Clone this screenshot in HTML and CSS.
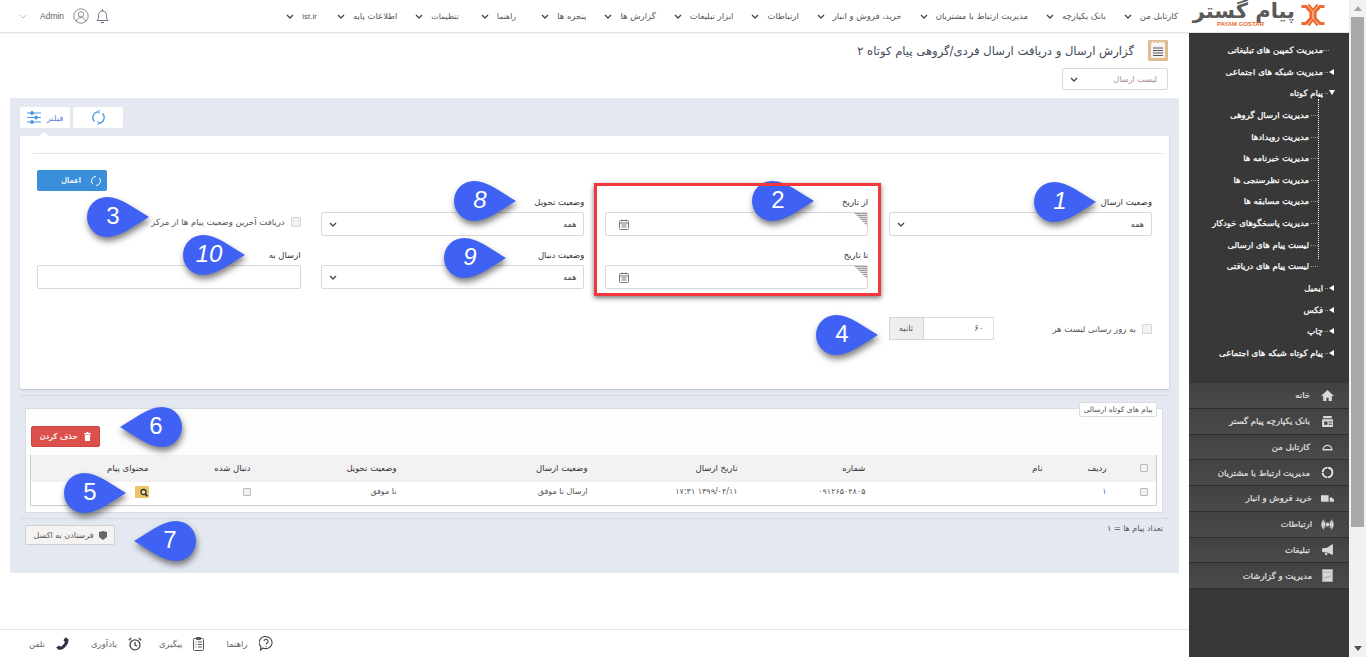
FILE: index.html
```html
<!DOCTYPE html>
<html lang="fa" dir="rtl">
<head>
<meta charset="utf-8">
<title>گزارش ارسال و دریافت</title>
<link rel="stylesheet" href="styles.css">
</head>
<body>
<div class="shell">
  <div class="scrollbar">
    <span class="sb-up"></span>
    <span class="sb-thumb"></span>
    <span class="sb-down"></span>
  </div>
  <div class="app">
    <header class="topbar">
      <div class="logo">
        <svg class="logo-x" width="24" height="24" viewBox="0 0 24 24" fill="none" stroke="#ee6a2c" stroke-width="3.200"><path d="M.5 3.500h4.500l5 5.500v6l-5 5.500H.5"/><path d="M23.500 3.500H19l-5 5.500v6l5 5.500h4.500"/><path d="M7.500 1.500L12 7l4.500-5.500M7.500 22.500L12 17l4.500 5.500" stroke-width="2"/></svg>
        <div class="logo-words">
          <span class="logo-fa">پیام گستر</span>
          <span class="logo-en">PAYAM GOSTAR</span>
        </div>
      </div>
      <nav class="nav">
        <a class="nav-item">کارتابل من<svg class="chev" viewBox="0 0 8 5"><path d="M1 1l3 3 3-3"/></svg></a>
        <a class="nav-item">بانک یکپارچه<svg class="chev" viewBox="0 0 8 5"><path d="M1 1l3 3 3-3"/></svg></a>
        <a class="nav-item">مدیریت ارتباط با مشتریان<svg class="chev" viewBox="0 0 8 5"><path d="M1 1l3 3 3-3"/></svg></a>
        <a class="nav-item">خرید، فروش و انبار<svg class="chev" viewBox="0 0 8 5"><path d="M1 1l3 3 3-3"/></svg></a>
        <a class="nav-item">ارتباطات<svg class="chev" viewBox="0 0 8 5"><path d="M1 1l3 3 3-3"/></svg></a>
        <a class="nav-item">ابزار تبلیغات<svg class="chev" viewBox="0 0 8 5"><path d="M1 1l3 3 3-3"/></svg></a>
        <a class="nav-item">گزارش ها<svg class="chev" viewBox="0 0 8 5"><path d="M1 1l3 3 3-3"/></svg></a>
        <a class="nav-item">پنجره ها<svg class="chev" viewBox="0 0 8 5"><path d="M1 1l3 3 3-3"/></svg></a>
        <a class="nav-item nav-sm nav-help">راهنما<svg class="chev" viewBox="0 0 8 5"><path d="M1 1l3 3 3-3"/></svg></a>
        <a class="nav-item nav-sm nav-settings">تنظیمات<svg class="chev" viewBox="0 0 8 5"><path d="M1 1l3 3 3-3"/></svg></a>
        <a class="nav-item">اطلاعات پایه<svg class="chev" viewBox="0 0 8 5"><path d="M1 1l3 3 3-3"/></svg></a>
        <a class="nav-item nav-latin">ist.ir<svg class="chev" viewBox="0 0 8 5"><path d="M1 1l3 3 3-3"/></svg></a>
      </nav>
      <div class="user">
        <svg class="chev chev-light" viewBox="0 0 8 5"><path d="M1 1l3 3 3-3"/></svg>
        <span class="user-name">Admin</span>
        <svg width="16" height="16" viewBox="0 0 16 16" fill="none" stroke="#8b8f9c"><circle cx="8" cy="8" r="7.200"/><circle cx="8" cy="6.300" r="2.700"/><path d="M3.200 13c1-2.600 2.800-3.400 4.800-3.400s3.800.8 4.800 3.400"/></svg>
        <svg width="13" height="16" viewBox="0 0 13 16" fill="none" stroke="#6f7480"><path d="M1 12.500c1.500-1.500 1.500-3 1.500-5 0-2.500 1.500-4.500 4-4.500s4 2 4 4.500c0 2 0 3.500 1.500 5z"/><path d="M5 14.500h3M6.500 1v2"/></svg>
      </div>
    </header>
    <div class="body">
      <aside class="sidebar">
        <ul class="tree">
          <li class="t-root t-none">مدیریت کمپین های تبلیغاتی</li>
          <li class="t-root t-closed">مدیریت شبکه های اجتماعی</li>
          <li class="t-root t-open">پیام کوتاه</li>
          <li class="t-sub-wrap">
            <ul class="t-subs">
              <li class="t-sub">مدیریت ارسال گروهی</li>
              <li class="t-sub">مدیریت رویدادها</li>
              <li class="t-sub">مدیریت خبرنامه ها</li>
              <li class="t-sub">مدیریت نظرسنجی ها</li>
              <li class="t-sub">مدیریت مسابقه ها</li>
              <li class="t-sub">مدیریت پاسخگوهای خودکار</li>
              <li class="t-sub">لیست پیام های ارسالی</li>
              <li class="t-sub">لیست پیام های دریافتی</li>
            </ul>
          </li>
          <li class="t-root t-closed">ایمیل</li>
          <li class="t-root t-closed">فکس</li>
          <li class="t-root t-closed">چاپ</li>
          <li class="t-root t-closed">پیام کوتاه شبکه های اجتماعی</li>
        </ul>
        <ul class="side-menu">
          <li class="sm-row"><svg class="sm-ic" viewBox="0 0 12 12"><path d="M6 1L0 6.500h2V11h3V8h2v3h3V6.500h2z"/></svg>خانه</li>
          <li class="sm-row"><svg class="sm-ic" viewBox="0 0 12 12"><path d="M2 1h8v2H2zM1 4h10v7H1zm2 2v3h3V6zm4 0v1h3V6zm0 2v1h3V8z" fill-rule="evenodd"/></svg>بانک یکپارچه پیام گستر</li>
          <li class="sm-row"><svg class="sm-ic" viewBox="0 0 12 12"><path d="M2 9a4 4 0 1 1 8 0z" fill="none" stroke="#d8d8d8" stroke-width="1.300"/></svg>کارتابل من</li>
          <li class="sm-row"><svg class="sm-ic" viewBox="0 0 12 12"><circle cx="6" cy="6" r="4.500" fill="none" stroke="#e4e4e4" stroke-width="1.800" stroke-dasharray="6.500 .6"/></svg>مدیریت ارتباط با مشتریان</li>
          <li class="sm-row sm-wide"><svg class="sm-ic" viewBox="0 0 12 12"><path d="M0 3h7v6H0zM8 5h2l2 2v2H8z"/></svg>خرید فروش و انبار</li>
          <li class="sm-row sm-wide"><svg class="sm-ic" viewBox="0 0 12 12" fill="none" stroke="#d8d8d8" stroke-width=".8"><circle cx="6" cy="6" r="1.500" fill="#d8d8d8"/><path d="M3.800 3a4 4 0 0 0 0 6M8.200 3a4 4 0 0 1 0 6M2.500 1.500a6.500 6.500 0 0 0 0 9M9.500 1.500a6.500 6.500 0 0 1 0 9"/></svg>ارتباطات</li>
          <li class="sm-row"><svg class="sm-ic" viewBox="0 0 12 12"><path d="M11 1v10L5 8.500H3L1 8V5l2-.5h2zM3.500 9h2l.5 2H4z"/></svg>تبلیغات</li>
          <li class="sm-row sm-wide"><svg class="sm-ic" viewBox="0 0 12 12" fill="none" stroke="#aaa"><path d="M1.500.5h9v11h-9z"/><path d="M3 3h6M3 9l2-2 1.500 1L9 6"/></svg>مدیریت و گزارشات</li>
        </ul>
      </aside>
      <main class="main">
        <div class="page-head">
          <div class="title-row">
            <svg class="title-ic" width="20" height="21" viewBox="0 0 20 21"><rect width="20" height="21" rx="1" fill="#dfbb92"/><rect x="3" y="3" width="14" height="15" rx="1" fill="#f4f4f4"/><path d="M5 8h10M5 10.500h10M5 13h10M5 15.500h10" stroke="#555" stroke-width="1.200"/><path d="M5 1.500v3M8 1.500v3M12 1.500v3M15 1.500v3" stroke="#fff" stroke-width="1.200"/></svg>
            <h1 class="title">گزارش ارسال و دریافت ارسال فردی/گروهی پیام کوتاه ۲</h1>
          </div>
          <div class="select select-head"><span>لیست ارسال</span><svg class="chev" viewBox="0 0 8 5"><path d="M1 1l3 3 3-3"/></svg></div>
        </div>
        <section class="panel">
          <div class="tabs">
            <div class="tab tab-refresh">
              <svg width="15" height="15" viewBox="0 0 16 16" fill="none" stroke="#4d9be6" stroke-width="1.500"><path d="M8 2a6 6 0 0 0-4.240 10.240M8 14a6 6 0 0 0 4.240-10.240"/><path d="M9.500.3L7 2l2.500 1.800M6.500 12.200L9 14l-2.500 1.700" stroke-width="1"/></svg>
            </div>
            <div class="tab tab-filter">
              <span>فیلتر</span>
              <svg width="14" height="13" viewBox="0 0 14 13" stroke="#4d9be6"><path d="M0 2h14M0 6.500h14M0 11h14"/><circle cx="5" cy="2" r="1.500" fill="#4d9be6"/><circle cx="9" cy="6.500" r="1.500" fill="#4d9be6"/><circle cx="5" cy="11" r="1.500" fill="#4d9be6"/></svg>
            </div>
          </div>
          <div class="card">
            <div class="card-rule"></div>
            <div class="apply-row">
              <button class="btn-apply"><svg width="12" height="12" viewBox="0 0 16 16" fill="none" stroke="#fff" stroke-width="1.300"><path d="M8 2a6 6 0 0 0-4.240 10.240M8 14a6 6 0 0 0 4.240-10.240"/></svg>اعمال</button>
            </div>
            <div class="form-grid">
              <div class="field">
                <label class="lbl">وضعیت ارسال</label>
                <div class="select"><span>همه</span><svg class="chev" viewBox="0 0 8 5"><path d="M1 1l3 3 3-3"/></svg></div>
              </div>
              <div class="field">
                <label class="lbl">از تاریخ</label>
                <div class="input date">
                  <svg width="10" height="11" viewBox="0 0 10 11" fill="none" stroke="#777"><rect x=".5" y="1.500" width="9" height="9" rx="1"/><path d="M.5 4h9M2.500 6h5M2.500 8h5M3 .5v2M7 .5v2"/></svg>
                </div>
              </div>
              <div class="field">
                <label class="lbl">وضعیت تحویل</label>
                <div class="select"><span>همه</span><svg class="chev" viewBox="0 0 8 5"><path d="M1 1l3 3 3-3"/></svg></div>
              </div>
              <div class="field field-check">
                <label class="check-line"><span class="cb"></span>دریافت آخرین وضعیت پیام ها از مرکز</label>
              </div>

              <div class="field field-empty"></div>
              <div class="field">
                <label class="lbl">تا تاریخ</label>
                <div class="input date">
                  <svg width="10" height="11" viewBox="0 0 10 11" fill="none" stroke="#777"><rect x=".5" y="1.500" width="9" height="9" rx="1"/><path d="M.5 4h9M2.500 6h5M2.500 8h5M3 .5v2M7 .5v2"/></svg>
                </div>
              </div>
              <div class="field">
                <label class="lbl">وضعیت دنبال</label>
                <div class="select"><span>همه</span><svg class="chev" viewBox="0 0 8 5"><path d="M1 1l3 3 3-3"/></svg></div>
              </div>
              <div class="field">
                <label class="lbl">ارسال به</label>
                <div class="input"></div>
              </div>

              <div class="refresh-row">
                <label class="check-line"><span class="cb"></span>به روز رسانی لیست هر</label>
                <div class="input-group"><span class="ig-value">۶۰</span><span class="ig-addon">ثانیه</span></div>
              </div>
            </div>
          </div>
          <div class="rule"></div>
          <section class="results">
            <div class="legend">پیام های کوتاه ارسالی</div>
            <div class="results-tools">
              <button class="btn-del"><svg width="7" height="9" viewBox="0 0 7 9" fill="#fff"><path d="M0 1h7v1H0zM2.500 0h2v1h-2zM.7 2.500h5.600L6 9H1z"/></svg>حذف کردن</button>
            </div>
            <table class="grid">
              <colgroup>
                <col class="c-a"><col class="c-b"><col class="c-c"><col class="c-d"><col class="c-e"><col class="c-f"><col class="c-g"><col class="c-h"><col class="c-i">
              </colgroup>
              <thead>
                <tr>
                  <th class="cell-cb"><span class="cb cb-sm"></span></th>
                  <th>ردیف</th><th>نام</th><th>شماره</th><th>تاریخ ارسال</th><th>وضعیت ارسال</th><th>وضعیت تحویل</th><th>دنبال شده</th><th>محتوای پیام</th>
                </tr>
              </thead>
              <tbody>
                <tr>
                  <td class="cell-cb"><span class="cb cb-sm"></span></td>
                  <td class="link">۱</td><td></td><td>۰۹۱۲۶۵۰۴۸۰۵</td><td>۱۳۹۹/۰۴/۱۱ ۱۷:۳۱</td><td>ارسال نا موفق</td><td>نا موفق</td>
                  <td><span class="cb cb-sm"></span></td>
                  <td><svg class="msg-ic" width="14" height="12" viewBox="0 0 14 12"><rect width="14" height="12" rx="1" fill="#edc468"/><circle cx="8.500" cy="6" r="2.500" fill="#f6e6b8" stroke="#333" stroke-width="1.300"/><path d="M10.300 8l2 2.300" stroke="#222" stroke-width="1.500"/></svg></td>
                </tr>
              </tbody>
            </table>
          </section>
          <div class="rule rule-b"></div>
          <div class="foot-row">
            <span class="count">تعداد پیام ها = ۱</span>
            <button class="btn-excel"><svg width="8" height="9" viewBox="0 0 8 9" fill="#666"><path d="M0 1l4-1 4 1v5L4 9 0 6z"/></svg>فرستادن به اکسل</button>
          </div>
        </section>
        <footer class="footer">
          <a class="f-item"><svg width="14" height="15" viewBox="0 0 14 15" fill="none" stroke="#444" stroke-width="1.100"><path d="M7 .6a6.300 6 0 1 1-3 11.400L1.500 14l.4-3.300A6.300 6 0 0 1 7 .6z"/><path d="M5 5.200a2 2 0 1 1 3 1.800c-.7.400-1 .8-1 1.600M7 10v1"/></svg>راهنما</a>
          <a class="f-item f-tight"><svg width="11" height="14" viewBox="0 0 11 14" fill="none" stroke="#555"><rect x=".5" y="1.500" width="10" height="12" rx="1"/><path d="M3.500.5h4v2h-4zM2.500 5h1M5 5h4M2.500 7.500h1M5 7.500h4M2.500 10h1M5 10h4"/></svg>پیگیری</a>
          <a class="f-item"><svg width="14" height="14" viewBox="0 0 14 14" fill="none" stroke="#444" stroke-width="1.300"><circle cx="7" cy="7.800" r="5"/><path d="M7 5v3l2 1M.8 3.200L3.200 1M13.200 3.200L10.800 1"/></svg>یادآوری</a>
          <a class="f-item"><svg width="13" height="13" viewBox="0 0 13 13" fill="#2c3345"><path d="M9.500.3l3 2c.4 3-1.500 6-3.500 8s-4 2.700-6.500 2.500L.2 10.500 3 8.400l1.600 1.400C6.300 9 8.500 6.500 9 5L7.400 3.200z"/></svg>تلفن</a>
        </footer>
      </main>
    </div>
  </div>

  <div class="redbox"></div>

  <div class="callout c1 it"><svg class="drop" viewBox="0 0 62 40"><path d="M20 0C34 0 48 12 62 20 48 28 34 40 20 40A20 20 0 0 1 20 0Z"/></svg><span>1</span></div>
  <div class="callout c2"><svg class="drop" viewBox="0 0 62 40"><path d="M20 0C34 0 48 12 62 20 48 28 34 40 20 40A20 20 0 0 1 20 0Z"/></svg><span>2</span></div>
  <div class="callout c3"><svg class="drop" viewBox="0 0 62 40"><path d="M20 0C34 0 48 12 62 20 48 28 34 40 20 40A20 20 0 0 1 20 0Z"/></svg><span>3</span></div>
  <div class="callout c4"><svg class="drop" viewBox="0 0 62 40"><path d="M20 0C34 0 48 12 62 20 48 28 34 40 20 40A20 20 0 0 1 20 0Z"/></svg><span>4</span></div>
  <div class="callout c5"><svg class="drop" viewBox="0 0 62 40"><path d="M20 0C34 0 48 12 62 20 48 28 34 40 20 40A20 20 0 0 1 20 0Z"/></svg><span>5</span></div>
  <div class="callout c6 flip"><svg class="drop" viewBox="0 0 62 40"><path d="M42 0C28 0 14 12 0 20 14 28 28 40 42 40A20 20 0 0 0 42 0Z"/></svg><span>6</span></div>
  <div class="callout c7 flip"><svg class="drop" viewBox="0 0 62 40"><path d="M42 0C28 0 14 12 0 20 14 28 28 40 42 40A20 20 0 0 0 42 0Z"/></svg><span>7</span></div>
  <div class="callout c8 it"><svg class="drop" viewBox="0 0 62 40"><path d="M20 0C34 0 48 12 62 20 48 28 34 40 20 40A20 20 0 0 1 20 0Z"/></svg><span>8</span></div>
  <div class="callout c9 it"><svg class="drop" viewBox="0 0 62 40"><path d="M20 0C34 0 48 12 62 20 48 28 34 40 20 40A20 20 0 0 1 20 0Z"/></svg><span>9</span></div>
  <div class="callout c10 it"><svg class="drop" viewBox="0 0 62 40"><path d="M20 0C34 0 48 12 62 20 48 28 34 40 20 40A20 20 0 0 1 20 0Z"/></svg><span>10</span></div>
</div>
</body>
</html>
```

FILE: styles.css
```css
* { box-sizing: border-box; }
html, body { margin: 0; padding: 0; height: 657px; overflow: hidden; background: #fff; }
body { font-family: "DejaVu Sans", "Liberation Sans", sans-serif; font-size: 9px; color: #555; }
ul { list-style: none; margin: 0; padding: 0; }
button { font-family: inherit; cursor: pointer; }

.shell { position: relative; display: flex; width: 1366px; height: 657px; }
.app { width: 1349px; height: 657px; display: flex; flex-direction: column; }

/* scrollbar */
.scrollbar { width: 17px; height: 657px; background: #f1f1f1; display: flex; flex-direction: column; align-items: center; flex: none; }
.sb-up { margin-top: 6px; width: 0; height: 0; border: 4px solid transparent; border-top: 0; border-bottom: 5px solid #a3a3a3; }
.sb-thumb { margin-top: 6px; width: 13px; height: 510px; background: #a8a8a8; }
.sb-down { margin-top: auto; margin-bottom: 6px; width: 0; height: 0; border: 4px solid transparent; border-bottom: 0; border-top: 5px solid #505050; }

/* top bar */
.topbar { height: 33px; flex: none; display: flex; align-items: center; background: #fff; border-bottom: 1px solid #e2e2e2; box-shadow: 0 1px 2px rgba(0,0,0,.06); position: relative; z-index: 2; }
.logo { width: 160px; flex: none; display: flex; align-items: center; gap: 6px; padding-right: 24px; height: 33px; }
.logo-x { flex: none; margin-top: -3px; }
.logo-words { display: flex; flex-direction: column; width: 82px; align-items: stretch; margin-top: -2px; }
.logo-fa { font-size: 21px; line-height: 19px; font-weight: 700; color: #5a5a5a; text-align: center; white-space: nowrap; }
.logo-en { direction: ltr; font-family: "Liberation Sans", sans-serif; font-size: 6px; line-height: 7px; font-weight: 700; color: #e8692c; text-align: left; padding-left: 4px; }
.nav { display: flex; align-items: center; gap: 18px; padding-right: 11px; white-space: nowrap; }
.nav-item { display: flex; align-items: center; gap: 8px; color: #555; font-size: 8.500px; }
.nav-sm { font-size: 7.800px; }
.nav-help { margin-right: 7px; }
.nav-settings { margin-right: 4px; }
.nav-latin { direction: ltr; flex-direction: row-reverse; font-family: "Liberation Sans", sans-serif; font-size: 8px; margin-right: 2px; }
.chev { width: 8px; height: 5px; fill: none; stroke: #444; stroke-width: 1.300; flex: none; }
.chev-light { stroke: #aaa; stroke-width: .8; }
.user { margin-right: auto; direction: ltr; display: flex; align-items: center; padding-left: 19px; gap: 7px; }
.user-name { font-family: "Liberation Sans", sans-serif; font-size: 8.500px; color: #666; margin-left: 6px; margin-right: 2px; }

.body { flex: 1; display: flex; min-height: 0; }

/* sidebar */
.sidebar { width: 160px; flex: none; background: #383838; display: flex; flex-direction: column; }
.tree { height: 350px; flex: none; padding-top: 7px; color: #fff; font-size: 8.500px; -webkit-text-stroke: .25px #fff; }
.t-root { position: relative; height: 21.650px; line-height: 21.650px; padding-right: 26px; white-space: nowrap; }
.t-root::before { content: ""; position: absolute; right: 15px; top: 7px; width: 0; height: 0; }
.t-root::after { content: ""; position: absolute; right: 21px; top: 10px; width: 3px; border-top: 1px dotted #999; }
.t-closed::before { border: 3px solid transparent; border-left: 0; border-right: 5px solid #fff; }
.t-open::before { border: 3px solid transparent; border-bottom: 0; border-top: 5px solid #fff; right: 14px; }
.t-none::before { display: none; }
.t-none::after { right: 20px; width: 6px; }
.t-subs { position: relative; }
.t-subs::before { content: ""; position: absolute; right: 30px; top: -6px; height: 160px; border-right: 1px dotted #fff; }
.t-sub { position: relative; height: 21.650px; line-height: 21.650px; padding-right: 40px; white-space: nowrap; }
.t-sub::after { content: ""; position: absolute; right: 31px; top: 10px; width: 7px; border-top: 1px dotted #999; }
.side-menu { flex: none; }
.sm-row { height: 25.750px; display: flex; align-items: center; background: linear-gradient(#424242, #4a4a4a); border-bottom: 1px solid #2d2d35; padding-right: 15px; gap: 11px; color: #e2e2e2; font-size: 8.500px; -webkit-text-stroke: .2px #e2e2e2; white-space: nowrap; }
.sm-wide { gap: 9px; }
.sm-ic { width: 13px; height: 13px; fill: #d8d8d8; flex: none; }

/* main */
.main { width: 1189px; flex: none; display: flex; flex-direction: column; height: 624px; }
.page-head { height: 65px; flex: none; padding: 7px 21px 0 0; }
.title-row { display: flex; align-items: center; gap: 14px; height: 21px; }
.title-ic { flex: none; }
.title { margin: 0; font-size: 11.600px; font-weight: 400; color: #3f4a5a; white-space: nowrap; }
.select, .input { height: 24px; background: #fff; border: 1px solid #d9d9d9; border-radius: 2px; display: flex; align-items: center; justify-content: space-between; padding: 0 7px; font-size: 8px; color: #444; }
.select-head { width: 106px; height: 22px; margin-top: 7px; color: #b08a8f; font-size: 8px; padding: 0 10px 0 7px; }
.panel { width: 1169px; height: 475px; margin-right: 10px; background: #e4e9f1; padding: 9px 10px 0; flex: none; display: flex; flex-direction: column; }
.tabs { display: flex; justify-content: flex-end; gap: 3px; height: 21px; }
.tab { width: 50px; height: 21px; background: #fff; border-radius: 2px; display: flex; align-items: center; justify-content: center; position: relative; }
.tab-filter { gap: 6px; color: #6b7fd0; font-size: 8.500px; }
.tab-filter::after { content: ""; position: absolute; bottom: -8px; left: 19px; width: 0; height: 0; border: 5px solid transparent; border-top: 0; border-bottom: 4px solid #fff; }
.card { margin-top: 8px; height: 253px; background: #fff; box-shadow: 0 1px 2px rgba(0,0,0,.18); padding: 0 17px; border-radius: 2px; flex: none; }
.card-rule { height: 18px; border-bottom: 1px solid #e3e3e3; margin: 0 -11px 0 -4px; }
.apply-row { display: flex; justify-content: flex-end; margin-top: 16px; }
.btn-apply { width: 70px; height: 21px; border: 0; border-radius: 2px; background: #3a8fdb; color: #fff; font-size: 8px; -webkit-text-stroke: .2px #fff; display: flex; align-items: center; justify-content: flex-start; gap: 9px; padding: 0 5px 0 0; }
.form-grid { display: grid; grid-template-columns: repeat(4, 263.500px); column-gap: 20.300px; row-gap: 13px; margin-top: 5px; grid-auto-rows: 40px; }
.field { display: flex; flex-direction: column; }
.lbl { height: 16px; line-height: 13px; font-size: 8.500px; color: #333; }
.field .select, .field .input { height: 24px; }
.date { position: relative; justify-content: flex-end; padding: 0 13px; }
.date::before { content: ""; position: absolute; right: 0; top: 0; width: 13px; height: 13px; background: repeating-linear-gradient(0deg, #9a9a9a 0 1px, #e0e0e0 1px 2px); clip-path: polygon(0 0, 100% 0, 100% 100%); }
.field-check { justify-content: flex-start; padding-top: 21px; }
.check-line { display: flex; align-items: center; gap: 6px; font-size: 8.500px; color: #555; white-space: nowrap; }
.cb { width: 10px; height: 10px; background: #f3f1f1; border: 1px solid #d6d6d6; border-radius: 1px; display: inline-block; flex: none; }
.cb-sm { width: 8px; height: 8px; background: #f0f0f0; border-color: #bbb; vertical-align: middle; }
.refresh-row { grid-column: 1; display: flex; justify-content: space-between; align-items: center; height: 23px; margin-top: 15px; }
.input-group { display: flex; height: 23px; width: 105px; }
.ig-value { flex: 1; border: 1px solid #dcdcdc; border-left: 0; padding: 0 9px; line-height: 21px; font-size: 8.500px; }
.ig-addon { width: 35px; background: #eee; border: 1px solid #d5d5d5; line-height: 21px; text-align: center; font-size: 8.500px; }

.rule { height: 1px; background: #d5d9df; margin-top: 6px; flex: none; }
.results { position: relative; margin: 12px 6px 0 0; padding: 0 5px 6px 5px; height: 105px; border: 1px solid #dadde0; background: #fdfdfd; flex: none; width: 1138px; }
.legend { position: absolute; right: 5px; top: -7px; width: 78px; height: 15px; background: #fff; border: 1px solid #dcdcdc; border-radius: 2px; font-size: 7.500px; line-height: 13px; text-align: center; color: #555; white-space: nowrap; }
.results-tools { height: 46px; padding-top: 17px; display: flex; justify-content: flex-end; }
.btn-del { width: 69px; height: 21px; background: #dc504c; border: 1px solid #d04440; border-radius: 2px; color: #fff; font-size: 8px; -webkit-text-stroke: .2px #fff; display: flex; align-items: center; justify-content: center; gap: 7px; padding: 0; }
.grid { width: 1126px; table-layout: fixed; border-collapse: collapse; background: #fff; border: 1px solid #c9cdd0; border-top: 0; font-size: 8px; color: #555; }
.c-a { width: 42px; } .c-b { width: 64px; } .c-c { width: 177px; } .c-d { width: 128px; } .c-e { width: 150px; } .c-f { width: 191px; } .c-g { width: 146px; } .c-h { width: 102px; } .c-i { width: 126px; }
.grid th { height: 27px; background: #f2f2f2; font-weight: 400; color: #333; font-size: 8.500px; text-align: right; padding: 0 8px 2px 0; white-space: nowrap; }
.grid td { height: 23px; padding: 0 8px 3px 0; text-align: right; white-space: nowrap; }
.grid .cell-cb { padding-right: 8px; }
.link { color: #3a6fb8; }
.msg-ic { vertical-align: middle; }
.rule-b { margin-top: 5px; }
.foot-row { display: flex; justify-content: space-between; padding: 6px 6px 0 5px; align-items: flex-start; height: 30px; }
.count { font-size: 8px; color: #555; line-height: 8px; }
.btn-excel { width: 90px; height: 20px; background: #f5f3f2; border: 1px solid #cfcfcf; border-radius: 2px; font-size: 8px; color: #555; display: flex; align-items: center; justify-content: center; gap: 5px; padding: 0; }

.footer { margin-top: auto; height: 28px; flex: none; border-top: 1px solid #e4e4e4; display: flex; align-items: center; justify-content: flex-end; padding-left: 29px; gap: 22px; }
.f-item { display: flex; align-items: center; gap: 11px; font-size: 8.500px; color: #666; }
.f-tight { margin-left: -5px; }

/* annotation overlays */
.redbox { position: absolute; left: 594px; top: 183px; width: 287px; height: 113px; border: 3px solid #f2383c; box-shadow: 0 2px 5px rgba(0,0,0,.55); z-index: 6; pointer-events: none; }
.callout { position: absolute; width: 62px; height: 40px; z-index: 5; color: #fff; font-family: "Liberation Sans", sans-serif; font-size: 24px; line-height: 40px; direction: ltr; }
.drop { position: absolute; inset: 0; width: 62px; height: 40px; fill: #3f62f5; filter: drop-shadow(1px 4px 3px rgba(0,0,0,.5)); overflow: visible; }
.callout span { position: absolute; left: 0; top: -1px; width: 52px; text-align: center; }
.flip span { left: 10px; }
.it span { font-style: italic; }
.c1 { left: 1034px; top: 182px; }
.c2 { left: 752px; top: 181px; }
.c3 { left: 87px; top: 197px; }
.c4 { left: 816px; top: 315px; }
.c5 { left: 64px; top: 473px; }
.c6 { left: 120px; top: 407px; }
.c7 { left: 134px; top: 521px; }
.c8 { left: 454px; top: 181px; }
.c9 { left: 444px; top: 238px; }
.c10 { left: 183px; top: 235px; }
```
